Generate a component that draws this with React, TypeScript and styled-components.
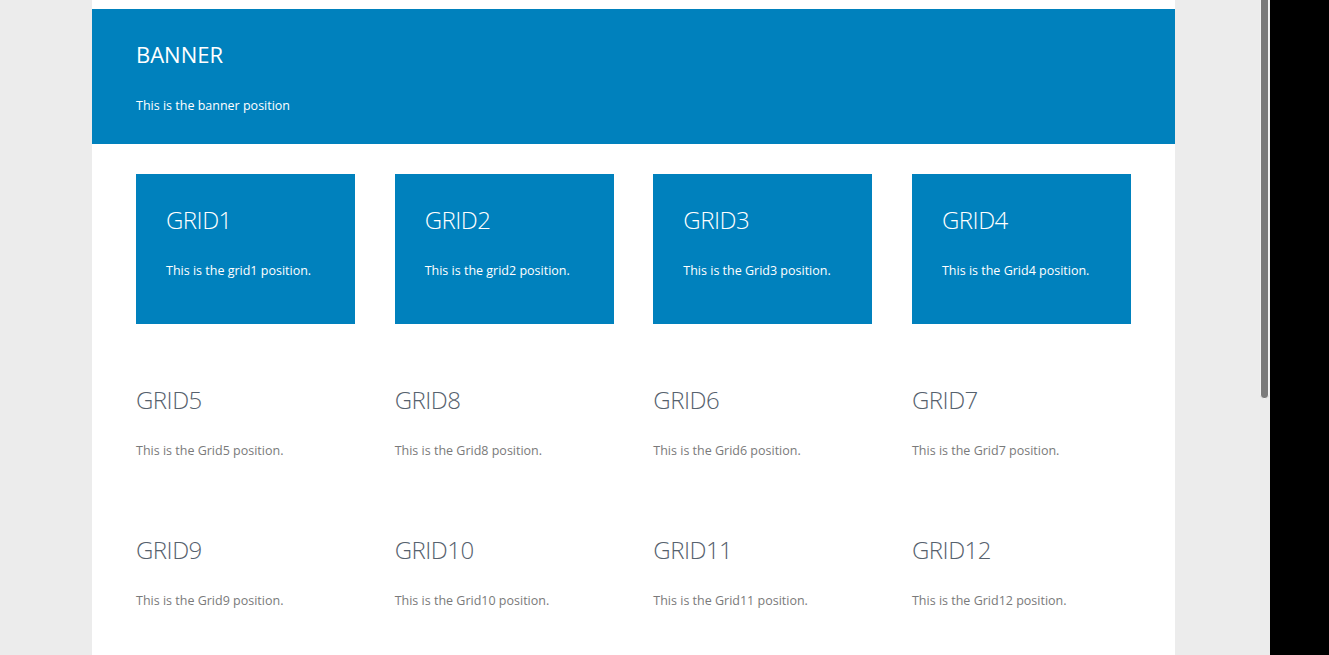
import React from 'react'
import styled, { createGlobalStyle } from 'styled-components'

const GlobalStyle = createGlobalStyle`
  html, body {
    margin: 0;
    padding: 0;
    height: 100%;
    overflow: hidden;
    background: #ececec;
    font-family: 'Open Sans', 'Liberation Sans', sans-serif;
  }
`

const Screen = styled.div`
  display: flex;
  width: 1329px;
  height: 655px;
  overflow: hidden;
`

const Viewport = styled.div`
  position: relative;
  width: 1270px;
  height: 655px;
  background: #ececec;
`

const SideStrip = styled.div`
  flex: 1;
  background: #000;
`

const ScrollThumb = styled.div`
  position: absolute;
  top: -4px;
  left: 1260px;
  width: 7px;
  height: 401px;
  background: #7b7b7b;
  border: 1px solid #f4f4f4;
  border-radius: 0 0 4px 4px;
`

const Container = styled.div`
  width: 1083px;
  height: 646px;
  margin-left: 92px;
  padding-top: 9px;
  background: #fff;
`

const Banner = styled.header`
  height: 135px;
  box-sizing: border-box;
  padding: 32px 44px 0;
  background: #0081bd;
  color: #fff;
`

const BannerTitle = styled.h1`
  margin: 0;
  font-size: 22px;
  line-height: 26px;
  font-weight: 400;
`

const BannerText = styled.p`
  margin: 29px 0 0;
  font-size: 12.5px;
  line-height: 20px;
`

const Grid = styled.section`
  padding: 30px 44px 0;
`

const Row = styled.div<{ $gapAfter?: boolean }>`
  display: grid;
  grid-template-columns: repeat(4, 219px);
  justify-content: space-between;
  margin-bottom: ${(p) => (p.$gapAfter ? '30px' : '0')};
`

const Cell = styled.div<{ $featured?: boolean }>`
  height: 150px;
  box-sizing: border-box;
  padding: ${(p) => (p.$featured ? '30px' : '30px 0')};
  background: ${(p) => (p.$featured ? '#0081bd' : 'transparent')};
  color: ${(p) => (p.$featured ? '#fff' : '#7a7a7a')};
`

const CellTitle = styled.h3<{ $featured?: boolean }>`
  margin: 0;
  padding-top: 1px;
  font-size: 24px;
  line-height: 29px;
  font-weight: 300;
  letter-spacing: -0.5px;
  color: ${(p) => (p.$featured ? '#fff' : '#56616d')};
`

const CellText = styled.p`
  margin: 27px 0 0;
  font-size: 12.5px;
  line-height: 20px;
`

const rows = [
  [
    { t: 'GRID1', d: 'This is the grid1 position.' },
    { t: 'GRID2', d: 'This is the grid2 position.' },
    { t: 'GRID3', d: 'This is the Grid3 position.' },
    { t: 'GRID4', d: 'This is the Grid4 position.' },
  ],
  [
    { t: 'GRID5', d: 'This is the Grid5 position.' },
    { t: 'GRID8', d: 'This is the Grid8 position.' },
    { t: 'GRID6', d: 'This is the Grid6 position.' },
    { t: 'GRID7', d: 'This is the Grid7 position.' },
  ],
  [
    { t: 'GRID9', d: 'This is the Grid9 position.' },
    { t: 'GRID10', d: 'This is the Grid10 position.' },
    { t: 'GRID11', d: 'This is the Grid11 position.' },
    { t: 'GRID12', d: 'This is the Grid12 position.' },
  ],
]

export default function App() {
  return (
    <>
      <GlobalStyle />
      <Screen>
        <Viewport>
          <Container>
            <Banner>
              <BannerTitle>BANNER</BannerTitle>
              <BannerText>This is the banner position</BannerText>
            </Banner>
            <Grid>
              {rows.map((row, i) => (
                <Row key={i} $gapAfter={i === 0}>
                  {row.map((c) => (
                    <Cell key={c.t} $featured={i === 0}>
                      <CellTitle $featured={i === 0}>{c.t}</CellTitle>
                      <CellText>{c.d}</CellText>
                    </Cell>
                  ))}
                </Row>
              ))}
            </Grid>
          </Container>
          <ScrollThumb />
        </Viewport>
        <SideStrip />
      </Screen>
    </>
  )
}
